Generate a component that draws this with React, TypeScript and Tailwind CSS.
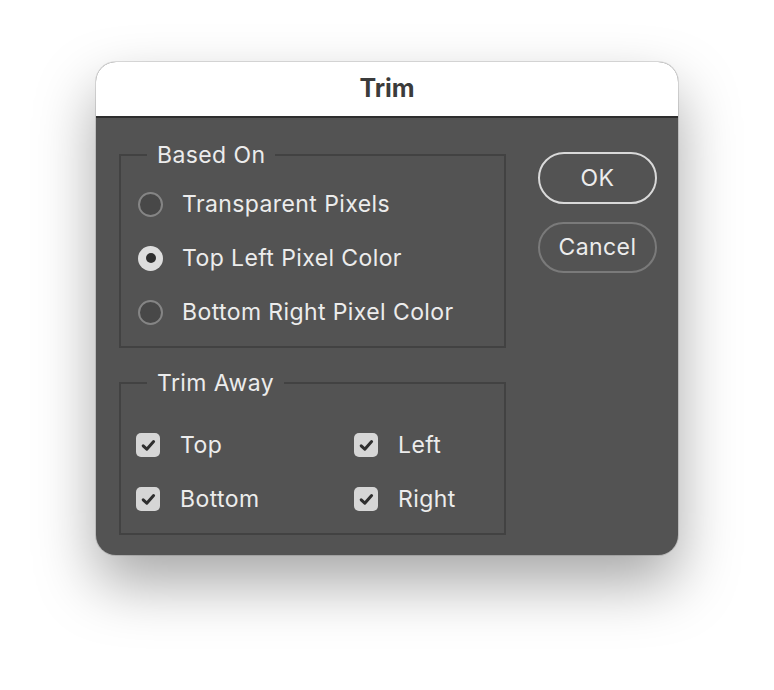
import React from "react";

const font = { fontFamily: "Inter, 'Noto Sans', sans-serif" };

function Radio({ checked, label }: { checked?: boolean; label: string }) {
  return (
    <div className="flex h-8 items-center">
      {checked ? (
        <div className="flex h-[25px] w-[25px] items-center justify-center rounded-full bg-[#dedede]">
          <div className="h-[10px] w-[10px] rounded-full bg-[#2f2f2f]" />
        </div>
      ) : (
        <div className="h-[25px] w-[25px] rounded-full border-2 border-[#858585] bg-[#484848]" />
      )}
      <span className="ml-[19px] text-[23px] tracking-[0.4px] text-[#ececec]">{label}</span>
    </div>
  );
}

function Check({ label }: { label: string }) {
  return (
    <div className="flex h-8 items-center">
      <div className="flex h-6 w-6 items-center justify-center rounded-[5px] bg-[#d6d6d6]">
        <svg width="15" height="13" viewBox="0 0 15 13">
          <path d="M2.2 6.8 L5.8 10.2 L12.6 2.6" fill="none" stroke="#2f2f2f" strokeWidth="3" strokeLinecap="round" strokeLinejoin="round" />
        </svg>
      </div>
      <span className="ml-5 text-[23px] tracking-[0.4px] text-[#ececec]">{label}</span>
    </div>
  );
}

export default function App() {
  return (
    <div className="flex min-h-[690px] w-full justify-center bg-white pt-[62px]" style={font}>
      <div className="h-[493px] w-[582px] overflow-hidden rounded-[20px] bg-[#535353] shadow-[0_28px_60px_rgba(0,0,0,0.35),0_0_0_1px_rgba(0,0,0,0.12)]">
        <div className="flex h-[56px] items-center justify-center border-b-2 border-[#2e2e2e] bg-white">
          <span className="text-[25px] font-bold text-[#3b3b3b]">Trim</span>
        </div>
        <div className="flex pl-[23px] pr-[21px] pt-[23px]">
          <div className="flex w-[387px] shrink-0 flex-col gap-[21px]">
            <fieldset className="h-[207px] border-2 border-[#424242]">
              <legend className="ml-[26px] px-[10px] text-[23px] leading-7 tracking-[0.4px] text-[#ececec]">Based On</legend>
              <div className="flex flex-col gap-[22px] pl-[17px] pt-[19px]">
                <Radio label="Transparent Pixels" />
                <Radio checked label="Top Left Pixel Color" />
                <Radio label="Bottom Right Pixel Color" />
              </div>
            </fieldset>
            <fieldset className="h-[166px] border-2 border-[#424242]">
              <legend className="ml-[26px] px-[10px] text-[23px] leading-7 tracking-[0.4px] text-[#ececec]">Trim Away</legend>
              <div className="grid grid-cols-[218px_1fr] gap-y-[22px] pl-[15px] pt-[32px]">
                <Check label="Top" />
                <Check label="Left" />
                <Check label="Bottom" />
                <Check label="Right" />
              </div>
            </fieldset>
          </div>
          <div className="ml-[32px] flex shrink-0 flex-col gap-[18px] pt-[11px]">
            <button className="flex h-[52px] w-[119px] items-center justify-center rounded-full border-2 border-[#d9d9d9] text-[23px] tracking-[0.4px] text-[#ececec]">
              OK
            </button>
            <button className="flex h-[51px] w-[119px] items-center justify-center rounded-full border-2 border-[#7a7a7a] text-[23px] tracking-[0.4px] text-[#ececec]">
              Cancel
            </button>
          </div>
        </div>
      </div>
    </div>
  );
}
